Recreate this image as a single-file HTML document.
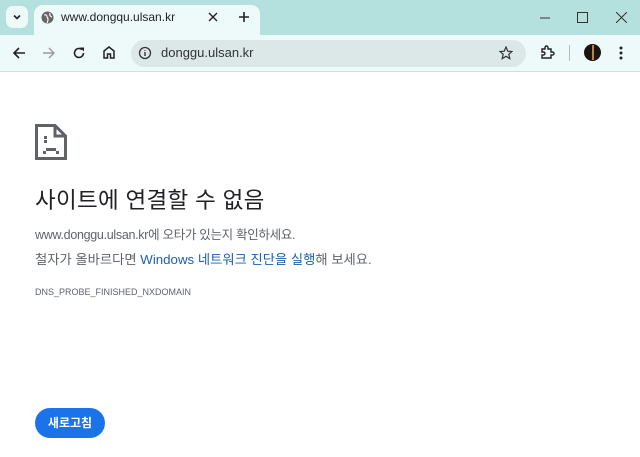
<!DOCTYPE html>
<html><head><meta charset="utf-8"><style>
*{margin:0;padding:0;box-sizing:border-box}
body{width:640px;height:457px;overflow:hidden;background:#fff;font-family:"Liberation Sans","Noto Sans CJK KR",sans-serif;position:relative}
.strip{position:absolute;left:0;top:0;width:640px;height:35px;background:#b4e1dd}
.tb{position:absolute;left:0;top:35px;width:640px;height:37px;background:#eefafa;border-bottom:1px solid #d0dede}
.tab{position:absolute;left:34px;top:5px;width:226px;height:31px;background:#eefafa;border-radius:9px 9px 0 0}
.abs{position:absolute}
.omni{position:absolute;left:131px;top:40px;width:395px;height:27px;border-radius:14px;background:#dce8e8}
svg{position:absolute}
</style></head><body>
<div class="strip"></div>
<div class="abs" style="left:6px;top:6px;width:22px;height:22px;border-radius:7px;background:#eefafa"></div>
<svg style="left:12px;top:12px" width="10" height="10"><path d="M2 3.5 L5 6.5 L8 3.5" stroke="#222" stroke-width="1.6" fill="none"/></svg>
<div class="tab"></div>
<svg style="left:41px;top:11px" width="13" height="13"><circle cx="6.5" cy="6.5" r="6" fill="#666"/><path d="M3 4 Q6 3 6 6 Q8 8 6 12 M9 2 Q8 5 11 6" stroke="#eee" stroke-width="1.3" fill="none"/></svg>
<div class="abs" style="left:61px;top:10px;font-size:12px;color:#222">www.dongqu.ulsan.kr</div>
<svg style="left:208px;top:12px" width="10" height="10"><path d="M1 1L9 9M9 1L1 9" stroke="#222" stroke-width="1.4"/></svg>
<svg style="left:238px;top:11px" width="12" height="12"><path d="M6 1V11M1 6H11" stroke="#222" stroke-width="1.6"/></svg>
<svg style="left:540px;top:17px" width="10" height="2"><path d="M0 1H10" stroke="#333"/></svg>
<svg style="left:577px;top:12px" width="11" height="11"><rect x="0.5" y="0.5" width="10" height="10" fill="none" stroke="#333"/></svg>
<svg style="left:616px;top:12px" width="11" height="11"><path d="M0 0L11 11M11 0L0 11" stroke="#333"/></svg>
<div class="tb"></div>
<svg style="left:12px;top:46px" width="14" height="14"><path d="M13 7H2M7 2L2 7L7 12" stroke="#222" stroke-width="1.6" fill="none"/></svg>
<svg style="left:42px;top:46px" width="14" height="14"><path d="M1 7H12M7 2L12 7L7 12" stroke="#999" stroke-width="1.4" fill="none"/></svg>
<svg style="left:72px;top:46px" width="14" height="14"><path d="M11.5 7A4.5 4.5 0 1 1 10 3.6" stroke="#222" stroke-width="1.6" fill="none"/><path d="M8 1.5H12V5.5Z" fill="#222"/></svg>
<svg style="left:102px;top:45px" width="14" height="14"><path d="M2 13V6L7 2L12 6V13H8.5V9H5.5V13Z" stroke="#222" stroke-width="1.5" fill="none"/></svg>
<div class="omni"></div>
<svg style="left:138px;top:46px" width="14" height="14"><circle cx="7" cy="7" r="5.5" stroke="#333" stroke-width="1.3" fill="none"/><path d="M7 6V10M7 4V4.8" stroke="#333" stroke-width="1.4"/></svg>
<div class="abs" style="left:161px;top:45px;font-size:13px;color:#333">donggu.ulsan.kr</div>
<svg style="left:499px;top:46px" width="14" height="14"><path d="M7 1L8.8 5.2L13 5.5L9.8 8.3L10.8 12.6L7 10.3L3.2 12.6L4.2 8.3L1 5.5L5.2 5.2Z" stroke="#333" stroke-width="1.2" fill="none"/></svg>
<svg style="left:540px;top:45px" width="15" height="15"><path d="M2 4H5V2.5A1.5 1.5 0 0 1 8 2.5V4H11V7H12.5A1.5 1.5 0 0 1 12.5 10H11V13H2V10H3.5A1.5 1.5 0 0 0 3.5 7H2Z" stroke="#222" stroke-width="1.4" fill="none"/></svg>
<div class="abs" style="left:569px;top:45px;width:1px;height:16px;background:#bbb"></div>
<div class="abs" style="left:584px;top:44px;width:17px;height:17px;border-radius:50%;background:#1a1410"></div>
<div class="abs" style="left:592px;top:45px;width:2px;height:15px;background:#c08040"></div>
<svg style="left:619px;top:45px" width="4" height="16"><circle cx="2" cy="3" r="1.5" fill="#222"/><circle cx="2" cy="8" r="1.5" fill="#222"/><circle cx="2" cy="13" r="1.5" fill="#222"/></svg>
<svg style="left:35px;top:124px" width="32" height="36"><path d="M1.5 1.5H20L30.5 12V34.5H1.5Z M20 1.5V12H30.5" stroke="#5f6368" stroke-width="3" fill="none"/><rect x="9" y="12" width="3" height="3" fill="#5f6368"/><rect x="9" y="16" width="3" height="3" fill="#5f6368"/><rect x="8" y="27" width="3" height="3" fill="#5f6368"/><rect x="11" y="24" width="10" height="3" fill="#5f6368"/><rect x="21" y="27" width="3" height="3" fill="#5f6368"/></svg>
<div class="abs" style="left:35px;top:183px;font-size:22.5px;color:#202124;letter-spacing:0.3px">사이트에 연결할 수 없음</div>
<div class="abs" style="left:35px;top:224px;font-size:12.5px;color:#5f6368;letter-spacing:-0.3px">www.donggu.ulsan.kr에 오타가 있는지 확인하세요.</div>
<div class="abs" style="left:35px;top:249px;font-size:13.3px;color:#5f6368">철자가 올바르다면 <span style="color:#1a5fb4">Windows 네트워크 진단을 실행</span>해 보세요.</div>
<div class="abs" style="left:35px;top:287px;font-size:9px;color:#5f6368">DNS_PROBE_FINISHED_NXDOMAIN</div>
<div class="abs" style="left:35px;top:408px;width:70px;height:30px;border-radius:15px;background:#1a73e8;color:#fff;font-size:12px;font-weight:bold;text-align:center;line-height:30px">새로고침</div>
</body></html>
